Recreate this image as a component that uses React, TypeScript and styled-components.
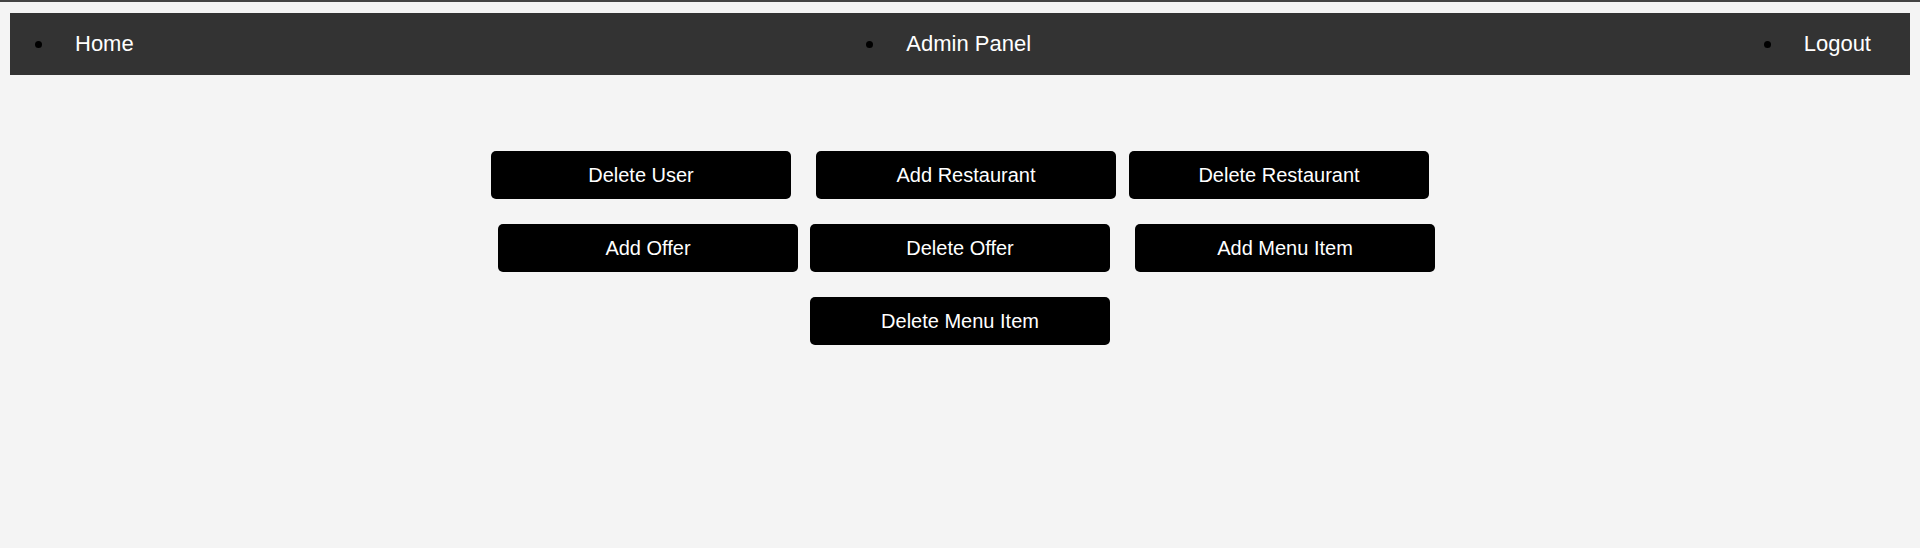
import styled, { createGlobalStyle } from "styled-components";
import React from "react";

const GlobalStyle = createGlobalStyle`
  html, body {
    margin: 0;
    padding: 0;
    background: #f4f4f4;
    font-family: "Liberation Sans", Arial, sans-serif;
  }
`;

const TopStrip = styled.div`
  height: 2px;
  background: #444;
`;

const Page = styled.div`
  padding: 11px 10px 0;
`;

const NavBar = styled.nav`
  background: #333;
  height: 62px;
`;

const NavList = styled.ul`
  display: flex;
  justify-content: space-between;
  align-items: center;
  height: 100%;
  margin: 0;
  padding: 0 14px 0 45px;
  list-style: disc;
  color: #000;
`;

const NavItem = styled.li`
  padding: 0 25px 0 20px;
  font-size: 22px;
`;

const NavLink = styled.a`
  color: #fff;
  text-decoration: none;
  cursor: pointer;
`;

const ButtonArea = styled.div`
  display: flex;
  flex-direction: column;
  gap: 25px;
  padding-top: 76px;
`;

const ButtonRow = styled.div`
  display: flex;
  justify-content: center;
`;

const ActionButton = styled.button<{ $left?: number; $right?: number }>`
  width: 300px;
  height: 48px;
  margin: 0 ${(p) => p.$right ?? 0}px 0 ${(p) => p.$left ?? 0}px;
  background: #000;
  color: #fff;
  border: none;
  border-radius: 5px;
  font-family: "Liberation Sans", Arial, sans-serif;
  font-size: 20px;
  cursor: pointer;
`;

export default function App() {
  return (
    <>
      <GlobalStyle />
      <TopStrip />
      <Page>
        <NavBar>
          <NavList>
            <NavItem>
              <NavLink>Home</NavLink>
            </NavItem>
            <NavItem>
              <NavLink>Admin Panel</NavLink>
            </NavItem>
            <NavItem>
              <NavLink>Logout</NavLink>
            </NavItem>
          </NavList>
        </NavBar>
        <ButtonArea>
          <ButtonRow>
            <ActionButton $right={12.5}>Delete User</ActionButton>
            <ActionButton $left={12.5} $right={6.5}>Add Restaurant</ActionButton>
            <ActionButton $left={6.5}>Delete Restaurant</ActionButton>
          </ButtonRow>
          <ButtonRow>
            <ActionButton $left={13} $right={6}>Add Offer</ActionButton>
            <ActionButton $left={6} $right={12.5}>Delete Offer</ActionButton>
            <ActionButton $left={12.5}>Add Menu Item</ActionButton>
          </ButtonRow>
          <ButtonRow>
            <ActionButton>Delete Menu Item</ActionButton>
          </ButtonRow>
        </ButtonArea>
      </Page>
    </>
  );
}
